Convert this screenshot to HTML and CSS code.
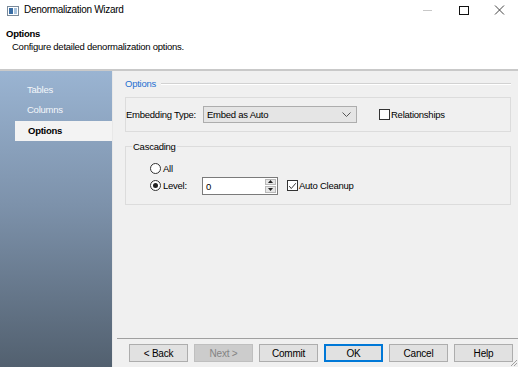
FILE: index.html
```html
<!DOCTYPE html>
<html>
<head>
  <link rel="stylesheet" href="styles.css">
</head>
<body>
  <div class="window">
    <div class="titlebar">
      <svg class="app-icon" width="12" height="10" viewBox="0 0 12 10">
        <rect x="0.5" y="0.5" width="11" height="9" fill="#fff" stroke="#7a8a9a"/>
        <rect x="2" y="2" width="4" height="6" fill="#3a6ea5"/>
        <rect x="7" y="2" width="3" height="6" fill="#a9c4de"/>
      </svg>
      <span class="title">Denormalization Wizard</span>
      <div class="controls">
        <svg width="36" height="24" viewBox="0 0 36 24"><line x1="13" y1="10.5" x2="22" y2="10.5" stroke="#c8c8c8"/></svg>
        <svg width="36" height="24" viewBox="0 0 36 24"><rect x="13.5" y="6.5" width="9" height="8" fill="none" stroke="#111"/></svg>
        <svg width="36" height="24" viewBox="0 0 36 24"><path d="M13 5.5 L22 14.5 M22 5.5 L13 14.5" stroke="#444"/></svg>
      </div>
    </div>

    <div class="header">
      <div class="header-title">Options</div>
      <div class="header-desc">Configure detailed denormalization options.</div>
    </div>

    <div class="content">
      <div class="sidebar">
        <div class="step">Tables</div>
        <div class="step">Columns</div>
        <div class="step active">Options</div>
      </div>

      <div class="main">
        <div class="page">
          <div class="section-head">
            <span class="section-label">Options</span>
            <span class="section-line"></span>
          </div>

          <div class="panel embed-row">
            <span class="label">Embedding Type:</span>
            <div class="select">
              <span>Embed as Auto</span>
              <svg width="9" height="6" viewBox="0 0 9 6"><path d="M0.5 0.5 L4.5 4.5 L8.5 0.5" fill="none" stroke="#555"/></svg>
            </div>
            <label class="check">
              <span class="box"></span>
              <span>Relationships</span>
            </label>
          </div>

          <fieldset class="panel cascade">
            <legend>Cascading</legend>
            <div class="radios">
              <div class="radio-row">
                <span class="radio"></span>
                <span>All</span>
              </div>
              <div class="radio-row">
                <span class="radio checked"></span>
                <span class="level-label">Level:</span>
                <div class="spinner">
                  <span class="spin-value">0</span>
                  <div class="spin-btns">
                    <span class="spin-btn"><svg width="5" height="3" viewBox="0 0 5 3"><path d="M2.5 0 L5 3 L0 3 Z" fill="#222"/></svg></span>
                    <span class="spin-btn"><svg width="5" height="3" viewBox="0 0 5 3"><path d="M0 0 L5 0 L2.5 3 Z" fill="#222"/></svg></span>
                  </div>
                </div>
                <label class="check">
                  <span class="box checked">
                    <svg width="11" height="11" viewBox="0 0 11 11"><path d="M1.5 5 L4 8 L9.5 1.5" fill="none" stroke="#222" stroke-width="1.1"/></svg>
                  </span>
                  <span>Auto Cleanup</span>
                </label>
              </div>
            </div>
          </fieldset>
        </div>

        <div class="footer">
          <button class="btn">&lt; Back</button>
          <button class="btn" disabled>Next &gt;</button>
          <button class="btn">Commit</button>
          <button class="btn default">OK</button>
          <button class="btn">Cancel</button>
          <button class="btn">Help</button>
        </div>
      </div>
    </div>

    <svg class="grip" width="10" height="10" viewBox="0 0 10 10">
      <path d="M9 3 L3 9 M9 6 L6 9" stroke="#a0a0a0"/>
    </svg>
  </div>
</body>
</html>
```

FILE: styles.css
```css
* {
  box-sizing: border-box;
}

body {
  margin: 0;
  font-family: "Liberation Sans", Arial, sans-serif;
  font-size: 9.5px;
  letter-spacing: -0.25px;
  color: #000;
  background: #fff;
}

.window {
  position: relative;
  width: 518px;
  height: 367px;
  display: flex;
  flex-direction: column;
  overflow: hidden;
}

.titlebar {
  height: 24px;
  display: flex;
  align-items: flex-start;
  padding-left: 7px;
  background: #fff;
}

.app-icon {
  margin-top: 6px;
}

.title {
  margin-left: 5px;
  margin-top: 4px;
  font-size: 10px;
  letter-spacing: -0.3px;
}

.controls {
  margin-left: auto;
  display: flex;
}

.header {
  height: 47px;
  padding: 3px 0 0 6px;
  background: #fff;
  border-bottom: 2px solid #c9c9c9;
}

.header-title {
  font-weight: bold;
  line-height: 13px;
}

.header-desc {
  padding-left: 6px;
  line-height: 13px;
}

.content {
  flex: 1;
  display: flex;
}

.sidebar {
  width: 113px;
  padding-top: 10px;
  background: linear-gradient(#9ab4d2, #7d92ab 45%, #52606f);
  border-right: 1px solid #e8e8e8;
}

.step {
  height: 20px;
  line-height: 14px;
  padding: 2px 0 0 27px;
  color: #f4f7fb;
}

.step.active {
  line-height: 20px;
  padding-top: 0;
  margin-left: 15px;
  padding-left: 13px;
  background: #f3f3f3;
  color: #000;
  font-weight: bold;
}

.main {
  flex: 1;
  display: flex;
  flex-direction: column;
  background: #f0f0f0;
}

.page {
  flex: 1;
  padding: 6px 7px 0 12px;
}

.section-head {
  display: flex;
  align-items: center;
  gap: 5px;
  height: 13px;
}

.section-label {
  color: #1e6fd0;
}

.section-line {
  flex: 1;
  border-top: 1px solid #d2d2d2;
  border-bottom: 1px solid #fff;
}

.panel {
  border: 1px solid #dcdcdc;
  margin: 0;
}

.embed-row {
  margin-top: 7px;
  height: 35px;
  display: flex;
  align-items: center;
}

.label {
  width: 77px;
  white-space: nowrap;
}

.select {
  width: 154px;
  height: 17px;
  border: 1px solid #adadad;
  background: #e5e5e5;
  display: flex;
  align-items: center;
  justify-content: space-between;
  padding: 0 5px 0 3px;
}

.check {
  display: flex;
  align-items: center;
  gap: 1px;
  white-space: nowrap;
}

.embed-row .check {
  margin-left: 22px;
}

.box {
  width: 11px;
  height: 11px;
  border: 1px solid #333;
  background: #fff;
  display: flex;
}

.cascade {
  margin-top: 8px;
  height: 65px;
  padding: 0;
}

.cascade legend {
  padding: 0 1px;
  margin-left: 6px;
  line-height: 13px;
}

.radios {
  padding: 7px 0 0 24px;
}

.radio-row {
  display: flex;
  align-items: center;
  height: 17px;
}

.radio {
  width: 11px;
  height: 11px;
  border: 1px solid #333;
  border-radius: 50%;
  background: #fff;
  margin-right: 2px;
  display: flex;
  align-items: center;
  justify-content: center;
}

.radio.checked::after {
  content: "";
  width: 5px;
  height: 5px;
  border-radius: 50%;
  background: #222;
}

.level-label {
  width: 39px;
}

.spinner {
  width: 76px;
  height: 18px;
  border: 1px solid #7a7a7a;
  background: #fff;
  display: flex;
}

.spin-value {
  flex: 1;
  padding: 3px 0 0 3px;
}

.spin-btns {
  width: 12px;
  display: flex;
  flex-direction: column;
  padding: 1px 1px 1px 0;
  gap: 1px;
}

.spin-btn {
  flex: 1;
  background: #e6e6e6;
  border: 1px solid #b9b9b9;
  display: flex;
  align-items: center;
  justify-content: center;
}

.cascade .check {
  margin-left: 9px;
}

.footer {
  height: 24px;
  margin: 0 0 5px 4px;
  border-top: 1px solid #a0a0a0;
  display: flex;
  align-items: flex-end;
  gap: 6px;
  padding-left: 12px;
}

.btn {
  width: 59px;
  height: 18px;
  padding: 0;
  font-family: inherit;
  font-size: 10px;
  letter-spacing: -0.2px;
  color: #000;
  background: #e1e1e1;
  border: 1px solid #adadad;
}

.btn:disabled {
  background: #cccccc;
  border-color: #bfbfbf;
  color: #838383;
}

.btn.default {
  border: 2px solid #0078d7;
}

.grip {
  position: absolute;
  right: 0;
  bottom: 0;
}
```
